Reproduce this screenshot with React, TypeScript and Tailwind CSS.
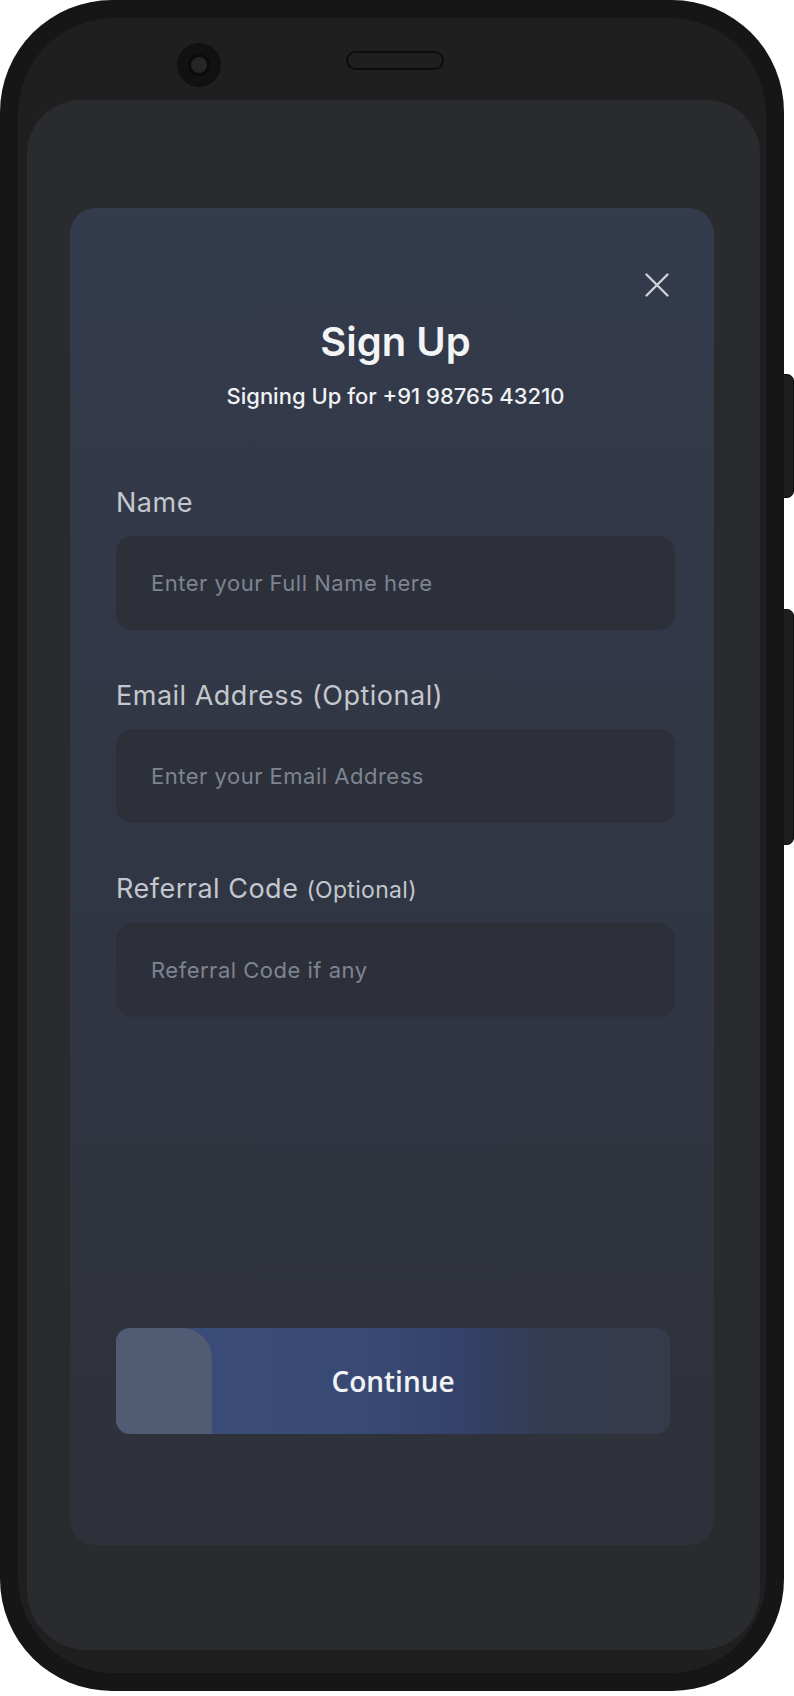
const fields = [
  { label: "Name", optional: "", placeholder: "Enter your Full Name here" },
  { label: "Email Address (Optional)", optional: "", placeholder: "Enter your Email Address" },
  { label: "Referral Code", optional: "(Optional)", placeholder: "Referral Code if any" },
];

function CloseIcon() {
  return (
    <svg width="26" height="26" viewBox="0 0 26 26" fill="none" aria-hidden="true">
      <path d="M2.5 2.5L23.5 23.5M23.5 2.5L2.5 23.5" stroke="#cfd2d8" strokeWidth="2.4" strokeLinecap="round" />
    </svg>
  );
}

function Field({ label, optional, placeholder }: { label: string; optional: string; placeholder: string }) {
  return (
    <div className="flex flex-col">
      <label className="text-[27px] leading-[32px] font-normal tracking-[0.5px] text-[#c4c7cd]">
        {label}
        {optional && <span className="ml-[8px] text-[23px] tracking-[0.3px]">{optional}</span>}
      </label>
      <div className="mt-[17px] flex h-[94px] items-center rounded-[16px] bg-[#2d3039] pl-[35px]">
        <span className="text-[22px] leading-[28px] tracking-[0.5px] text-[#7d8493]">{placeholder}</span>
      </div>
    </div>
  );
}

export default function App() {
  return (
    <div className="relative h-[1696px] w-[794px] overflow-hidden bg-white" style={{ fontFamily: "Inter, 'Noto Sans', sans-serif" }}>
      {/* side buttons */}
      <div className="absolute left-[780px] top-[374px] h-[124px] w-[14px] rounded-r-[7px] border border-[#0c0c0c] bg-[#1e1e1e]" />
      <div className="absolute left-[780px] top-[609px] h-[236px] w-[14px] rounded-r-[7px] border border-[#0c0c0c] bg-[#1e1e1e]" />

      {/* phone body */}
      <div className="relative h-[1691px] w-[784px] rounded-[112px] bg-[#161616] p-[18px]">
        <div className="flex h-full flex-col rounded-[96px] bg-[#1f1f1f] pb-[23px] pl-[9px] pr-[6px]">
          {/* earpiece + camera */}
          <div className="flex h-[82px] shrink-0 items-start">
            <div className="ml-[150px] mt-[25px] flex h-[44px] w-[44px] items-center justify-center rounded-full bg-[#111111]">
              <div className="h-[22px] w-[22px] rounded-full border-[3px] border-[#0b0b0b] bg-[#262626]" />
            </div>
            <div className="ml-[125px] mt-[33px] h-[19px] w-[98px] rounded-full border-2 border-[#0d0d0d] bg-[#1f1f1f]" />
          </div>

          {/* screen */}
          <div className="flex-1 rounded-t-[54px] rounded-b-[60px] bg-[#2a2b2f] pl-[43px] pt-[108px]">
            <div className="flex h-[1337px] w-[644px] flex-col rounded-[26px] bg-gradient-to-b from-[#343b4c] via-[#313644] to-[#2e3139] pl-[46px] pr-[39px] pb-[111px]">
              <div className="mt-[64px] flex justify-end pr-[5px]">
                <CloseIcon />
              </div>
              <h1 className="mt-[20px] text-center text-[40px] font-semibold leading-[48px] text-[#f3f4f6]">
                Sign Up
              </h1>
              <p className="mt-[16px] text-center text-[22px] font-medium leading-[28px] text-[#f0f1f3]">
                Signing Up for +91 98765 43210
              </p>

              <div className="mt-[77px] flex flex-col gap-[50px]">
                {fields.map((f) => (
                  <Field key={f.label} {...f} />
                ))}
              </div>

              <button className="relative mt-auto flex h-[106px] w-[554px] items-center justify-center overflow-hidden rounded-[14px] bg-[linear-gradient(90deg,#3b4c79_0%,#384a74_45%,#34426a_62%,#343c52_76%,#363b4a_100%)]">
                <span className="absolute bottom-0 left-0 top-0 w-[96px] rounded-tr-[30px] bg-[#5a6072]/75" />
                <span
                  className="relative text-[28px] font-semibold text-[#f2f3f5]"
                  style={{ fontFamily: "'Open Sans', sans-serif" }}
                >
                  Continue
                </span>
              </button>
            </div>
          </div>
        </div>
      </div>
    </div>
  );
}
